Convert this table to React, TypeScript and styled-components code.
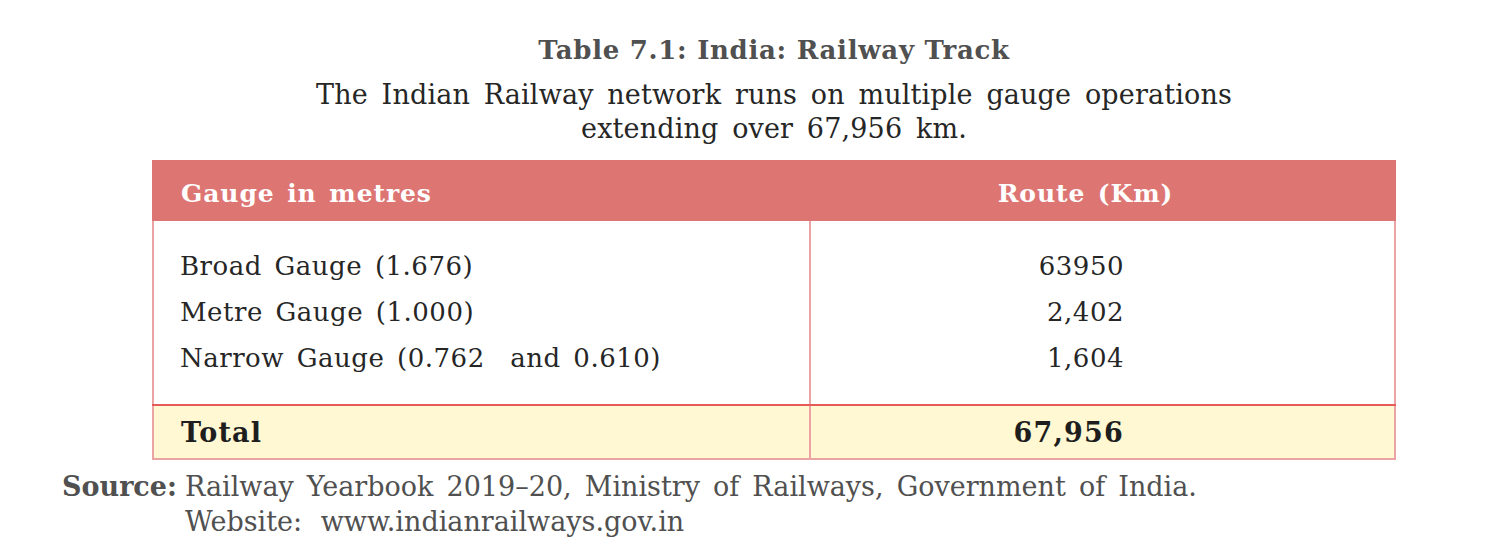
import React from "react";
import styled, { createGlobalStyle } from "styled-components";

const colors = {
  HEADER: "#dd7573",
  TOTAL_BG: "#fff8d2",
  BORDER: "#eba3a3",
  RED_LINE: "#e65a5a",
  TEXT: "#262626",
  GREY: "#505050",
};

const rows = [
  { gauge: "Broad Gauge (1.676)", route: "63950" },
  { gauge: "Metre Gauge (1.000)", route: "2,402" },
  { gauge: "Narrow Gauge (0.762\u00a0 and 0.610)", route: "1,604" },
];

const GlobalStyle = createGlobalStyle`
  body {
    margin: 0;
    background: #ffffff;
    font-family: "DejaVu Serif", "Liberation Serif", serif;
    color: ${colors.TEXT};
  }
`;

export default function App() {
  return (
    <>
      <GlobalStyle />
      <Page>
        <Figure>
          <Caption>
            <Title>Table 7.1: India: Railway Track</Title>
            <Subtitle>
              The Indian Railway network runs on multiple gauge operations
              <br />
              extending over 67,956 km.
            </Subtitle>
          </Caption>
          <Table>
            <thead>
              <tr>
                <HeadCell>Gauge in metres</HeadCell>
                <HeadCell $center>Route (Km)</HeadCell>
              </tr>
            </thead>
            <tbody>
              <tr>
                <BodyCell>
                  {rows.map((r) => (
                    <Line key={r.gauge}>{r.gauge}</Line>
                  ))}
                </BodyCell>
                <BodyCell $number>
                  {rows.map((r) => (
                    <Line key={r.route}>{r.route}</Line>
                  ))}
                </BodyCell>
              </tr>
              <TotalRow>
                <TotalCell>Total</TotalCell>
                <TotalCell $number>67,956</TotalCell>
              </TotalRow>
            </tbody>
          </Table>
        </Figure>
        <Source>
          <SourceLabel>Source:</SourceLabel>
          <SourceText>
            <div>Railway Yearbook 2019–20, Ministry of Railways, Government of India.</div>
            <div>{"Website:\u2009 www.indianrailways.gov.in"}</div>
          </SourceText>
        </Source>
      </Page>
    </>
  );
}

const Page = styled.div`
  width: 1500px;
  height: 552px;
  padding-top: 33px;
  box-sizing: border-box;
`;

const Figure = styled.div`
  margin-left: 152px;
  width: 1244px;
`;

const Caption = styled.div`
  display: flex;
  flex-direction: column;
  align-items: center;
  margin-bottom: 14px;
`;

const Title = styled.div`
  font-size: 26px;
  font-weight: 700;
  color: ${colors.GREY};
  line-height: 34px;
  letter-spacing: 0.7px;
`;

const Subtitle = styled.div`
  margin-top: 11px;
  font-size: 27px;
  line-height: 34px;
  text-align: center;
  color: ${colors.TEXT};
  letter-spacing: 0.15px;
  word-spacing: 5px;
`;

const Table = styled.table`
  width: 1244px;
  border-collapse: collapse;
  table-layout: fixed;
`;

const HeadCell = styled.th<{ $center?: boolean }>`
  background: ${colors.HEADER};
  color: #ffffff;
  height: 61px;
  padding: 6px ${(p) => (p.$center ? "34px" : "0")} 0
    ${(p) => (p.$center ? "0" : "27px")};
  text-align: ${(p) => (p.$center ? "center" : "left")};
  font-size: 25px;
  font-weight: 700;
  letter-spacing: 0.9px;
  word-spacing: 3px;
  border-left: 2px solid ${colors.HEADER};
  border-right: 2px solid ${colors.HEADER};
  box-sizing: border-box;

  &:first-child {
    width: 657px;
  }
`;

const BodyCell = styled.td<{ $number?: boolean }>`
  padding: 22px ${(p) => (p.$number ? "270px" : "0")} 23px
    ${(p) => (p.$number ? "0" : "26px")};
  text-align: ${(p) => (p.$number ? "right" : "left")};
  border: 2px solid ${colors.BORDER};
  border-top: none;
  border-bottom: 2px solid ${colors.RED_LINE};
  vertical-align: top;
  font-size: 26px;
  letter-spacing: 0.5px;
  word-spacing: 4px;
`;

const Line = styled.div`
  line-height: 46px;
  white-space: pre;
`;

const TotalRow = styled.tr`
  background: ${colors.TOTAL_BG};
`;

const TotalCell = styled.td<{ $number?: boolean }>`
  height: 52px;
  padding: 0 ${(p) => (p.$number ? "270px" : "0")} 0
    ${(p) => (p.$number ? "0" : "27px")};
  text-align: ${(p) => (p.$number ? "right" : "left")};
  border: 2px solid ${colors.BORDER};
  border-top: 2px solid ${colors.RED_LINE};
  font-size: 27px;
  font-weight: 700;
  letter-spacing: 1.2px;
  color: #1e1e1e;
`;

const Source = styled.div`
  display: flex;
  gap: 8px;
  margin-top: 9px;
  margin-left: 62px;
  font-size: 27px;
  line-height: 35px;
  color: ${colors.GREY};
`;

const SourceLabel = styled.div`
  font-weight: 700;
`;

const SourceText = styled.div`
  word-spacing: 4.5px;
  white-space: pre;
`;
